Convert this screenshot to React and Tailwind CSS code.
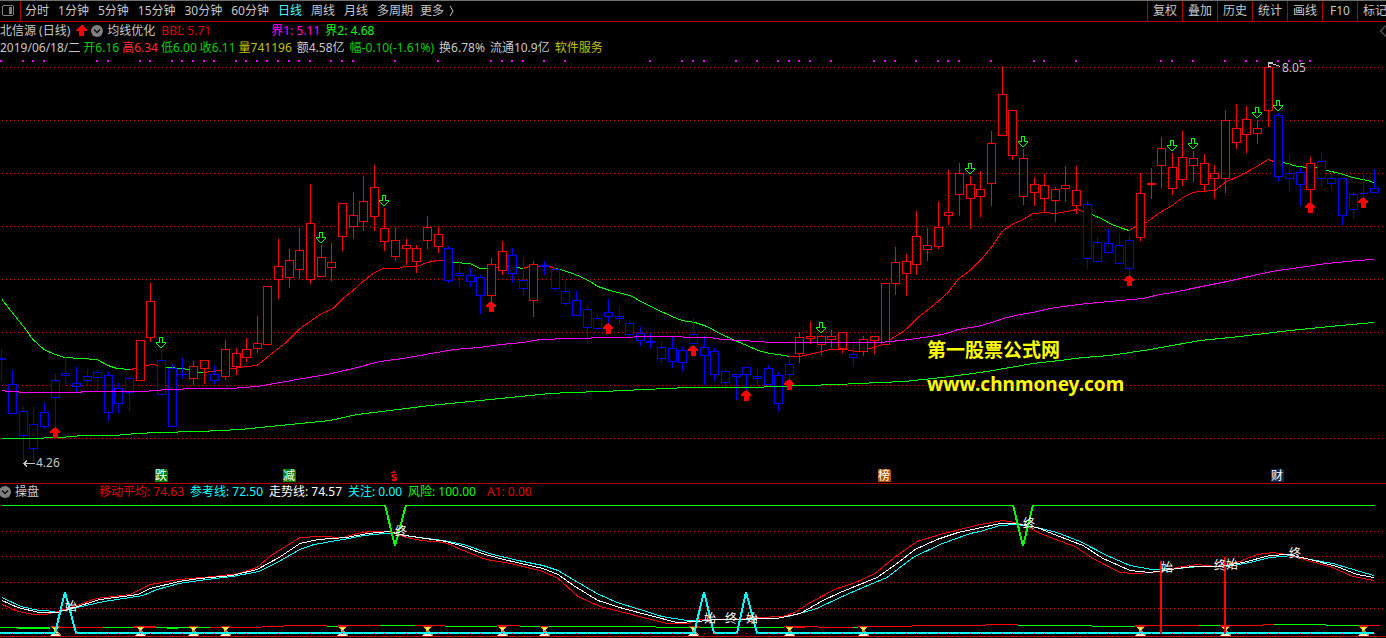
import React from "react";

const STEP = 10.64;
const xAt = (i) => Math.round(1.45 + i * STEP);

// [direction, high, body top, body bottom, low]
const CANDLES = [
  ["d", 350, 358, 359, 381], ["d", 370, 384, 413, 413], ["d", 407, 411, 435, 461], ["d", 407, 424, 448, 460],
  ["d", 403, 412, 426, 427], ["d", 374, 380, 397, 426], ["d", 356, 373, 375, 383], ["d", 367, 383, 386, 392],
  ["d", 369, 376, 380, 385], ["d", 370, 372, 377, 391], ["d", 372, 375, 412, 420], ["d", 383, 388, 403, 412],
  ["d", 377, 378, 392, 410], ["u", 340, 340, 380, 380], ["u", 283, 301, 337, 341], ["d", 350, 360, 394, 394],
  ["d", 364, 368, 426, 426], ["d", 358, 374, 374, 378], ["u", 361, 366, 378, 384], ["u", 360, 360, 368, 383],
  ["d", 365, 374, 380, 383], ["u", 340, 349, 376, 379], ["u", 348, 353, 366, 374], ["u", 338, 349, 357, 361],
  ["u", 316, 343, 348, 352], ["u", 286, 286, 344, 344], ["u", 239, 266, 279, 298], ["u", 249, 260, 277, 287],
  ["u", 228, 250, 269, 278], ["u", 184, 223, 279, 283], ["u", 245, 257, 276, 276], ["u", 243, 262, 267, 280],
  ["u", 203, 203, 236, 250], ["u", 192, 215, 226, 238], ["u", 176, 201, 221, 230], ["u", 165, 187, 216, 230],
  ["u", 208, 228, 241, 250], ["u", 227, 240, 256, 260], ["u", 239, 245, 248, 264], ["u", 245, 248, 261, 272],
  ["u", 216, 227, 240, 248], ["u", 227, 234, 246, 252], ["d", 246, 248, 280, 282], ["d", 261, 273, 275, 286],
  ["d", 268, 275, 281, 286], ["d", 275, 277, 295, 313], ["u", 258, 264, 295, 300], ["u", 241, 251, 270, 274],
  ["d", 248, 255, 273, 282], ["d", 258, 280, 288, 295], ["u", 261, 264, 300, 316], ["d", 261, 265, 266, 274],
  ["d", 263, 269, 288, 290], ["d", 281, 291, 303, 305], ["d", 291, 300, 315, 315], ["d", 306, 309, 327, 343],
  ["d", 314, 318, 328, 328], ["d", 299, 312, 316, 322], ["d", 307, 316, 318, 323], ["d", 321, 323, 334, 336],
  ["d", 327, 333, 340, 345], ["d", 333, 341, 342, 347], ["d", 342, 347, 358, 362], ["d", 337, 348, 361, 367],
  ["d", 347, 350, 362, 370], ["d", 318, 334, 343, 343], ["d", 336, 347, 355, 384], ["d", 348, 351, 374, 380],
  ["d", 369, 371, 382, 389], ["d", 374, 374, 376, 399], ["d", 367, 367, 374, 389], ["d", 369, 376, 378, 384],
  ["d", 365, 368, 384, 384], ["d", 372, 375, 403, 410], ["d", 358, 364, 374, 378], ["u", 332, 337, 353, 362],
  ["u", 321, 336, 338, 343], ["u", 335, 336, 344, 355], ["u", 330, 336, 339, 347], ["u", 332, 332, 348, 352],
  ["d", 341, 354, 357, 365], ["u", 336, 339, 351, 355], ["u", 336, 336, 340, 353], ["u", 283, 283, 344, 344],
  ["u", 247, 262, 283, 294], ["u", 254, 261, 273, 295], ["u", 211, 236, 264, 274], ["u", 228, 245, 249, 260],
  ["u", 201, 227, 246, 248], ["u", 170, 212, 215, 224], ["u", 163, 173, 194, 215], ["u", 176, 184, 198, 228],
  ["u", 171, 189, 196, 216], ["u", 131, 143, 183, 205], ["u", 66, 94, 135, 135], ["u", 110, 110, 155, 159],
  ["u", 149, 158, 196, 204], ["u", 177, 184, 192, 205], ["u", 174, 185, 198, 211], ["u", 187, 189, 200, 221],
  ["u", 166, 185, 188, 201], ["u", 166, 190, 205, 213], ["d", 200, 204, 258, 268], ["d", 238, 242, 261, 261],
  ["d", 229, 243, 252, 252], ["d", 233, 245, 263, 263], ["d", 236, 240, 268, 274], ["u", 173, 193, 237, 240],
  ["u", 168, 183, 184, 198], ["u", 137, 148, 165, 187], ["u", 153, 167, 188, 194], ["u", 131, 157, 179, 185],
  ["u", 151, 158, 165, 181], ["u", 154, 163, 184, 190], ["u", 165, 173, 178, 198], ["u", 110, 120, 178, 192],
  ["u", 104, 128, 142, 148], ["u", 106, 119, 134, 152], ["u", 120, 128, 133, 143], ["u", 64, 67, 110, 126],
  ["d", 113, 115, 176, 180], ["d", 154, 173, 178, 190], ["d", 168, 172, 184, 205], ["u", 157, 163, 189, 201],
  ["d", 153, 161, 178, 185], ["d", 171, 178, 183, 189], ["d", 178, 178, 215, 224], ["d", 192, 194, 209, 217],
  ["d", 174, 193, 193, 196], ["d", 169, 188, 192, 192],
];

const SIGNAL_DOTS = [
  0, 2, 3, 4, 9, 10, 13, 14, 16, 17, 18, 19, 20, 22, 23, 24, 25, 26, 27, 28, 29, 31, 32, 33, 37, 41, 46, 47, 48, 49,
  51, 53, 61, 64, 65, 66, 69, 71, 73, 74, 75, 76, 78, 82, 83, 84, 86, 88, 89, 90, 93, 97, 98, 101, 109, 110, 112,
  115, 117, 118, 120, 121, 122, 123,
];

const BBI = [
  ["#00ff00", "2,299 13,313 25,328 33,339 44,349 55,354 65,357 97,359 108,365 117,368 130,369"],
  ["#ff0000", "130,369 135,368 147,365 151,364 160,365"],
  ["#00ff00", "160,365 167,367 182,368 188,369 198,372 203,372"],
  ["#ff0000", "203,372 220,370 233,368 247,366 257,365 267,357 278,348 285,343 300,328 320,314 333,308 343,298 353,290 363,281 373,273 383,268 398,268 405,266 417,266 427,262 437,260 448,260"],
  ["#00ff00", "453,262 470,263 480,268 491,268"],
  ["#ff0000", "491,268 496,267 512,266"],
  ["#00ff00", "512,266 517,267 523,268"],
  ["#ff0000", "523,268 529,266 538,266 549,266 555,268"],
  ["#00ff00", "555,268 560,269 570,272 580,276 590,281 598,286 610,290 618,292 630,295 643,302 657,309 672,316 682,320 695,322 707,326 720,333 735,340 747,345 758,350 770,353 785,355 789,356"],
  ["#ff0000", "789,356 800,356 813,353 822,351 830,349 838,349 845,349 857,351 870,348 880,345 890,339 902,332 908,327 918,317 927,310 938,301 948,292 958,279 970,270 982,258 992,246 1002,231 1012,224 1023,219 1033,213 1045,212 1055,213 1067,211 1077,209 1087,212"],
  ["#00ff00", "1087,211 1092,214 1103,219 1112,224 1120,227 1129,230"],
  ["#ff0000", "1129,230 1136,226 1146,222 1152,218 1160,212 1172,205 1183,197 1193,192 1199,191 1215,190 1225,182 1242,174 1257,166 1268,159 1274,161"],
  ["#00ff00", "1274,160 1283,162 1298,166 1307,167 1315,167 1327,170 1340,173 1353,177 1367,180 1374,182"],
];

const BOUND_1 =
  "2,390 8,391 30,392 80,392 83,391 143,391 167,389 200,388 230,388 257,386 280,382 303,378 327,374 353,368 380,361 403,358 437,352 454,349 480,347 500,344 523,342 540,339 570,338 613,337 655,336 710,337 722,339 742,340 773,342 880,342 890,341 910,339 930,336 947,333 958,329 977,326 992,322 1003,318 1020,314 1033,312 1050,308 1063,306 1087,303 1110,301 1143,298 1160,294 1173,292 1187,289 1207,285 1227,281 1240,278 1253,275 1277,270 1293,268 1313,265 1327,263 1357,260 1374,259";
const BOUND_2 =
  "2,438 28,438 60,437 83,435 115,435 137,433 157,432 200,431 240,429 280,425 300,423 330,420 357,414 390,410 430,405 470,401 530,395 550,393 570,392 603,391 645,389 688,387 750,387 805,385 837,384 880,382 905,381 923,379 942,377 973,373 993,370 1010,367 1033,363 1060,360 1083,357 1110,355 1150,349 1200,340 1240,336 1290,330 1330,326 1374,322";

const REFERENCE =
  "2,597 21,606 39,610 59,611 77,607 104,601 143,595 157,589 179,583 207,579 232,576 259,571 279,561 300,549 314,544 343,539 364,535 384,533 396,533 411,536 443,540 464,544 489,553 518,560 543,565 558,570 573,579 597,593 617,602 640,609 662,616 687,620 713,619 737,619 777,618 792,615 817,608 840,597 863,587 887,577 913,557 940,544 970,533 980,531 1000,525 1017,524 1037,527 1057,532 1080,541 1107,555 1130,565 1152,569 1177,568 1200,566 1227,566 1250,562 1270,557 1293,555 1310,559 1333,563 1360,571 1374,575";
const TREND =
  "2,600 18,607 39,612 57,612 71,608 100,599 138,594 150,588 179,581 200,578 232,575 257,569 279,557 300,543 318,539 346,537 368,533 389,531 400,534 425,538 446,541 464,546 482,553 500,558 521,563 543,568 558,574 575,586 598,600 623,608 650,615 677,622 697,621 717,619 777,618 800,613 823,600 840,592 877,577 897,563 915,549 937,539 958,532 977,528 1000,523 1015,523 1037,527 1057,535 1083,545 1103,558 1130,570 1150,572 1170,569 1193,566 1220,566 1243,562 1270,555 1288,554 1310,559 1337,566 1357,574 1374,577";
const AVERAGE =
  "2,604 18,611 34,614 46,614 64,609 77,605 96,598 130,594 150,584 179,579 214,576 239,573 257,567 271,555 300,537 321,536 343,537 357,533 371,531 389,531 407,537 421,540 445,542 461,549 486,559 511,563 543,571 558,578 578,596 600,606 620,611 647,618 667,623 687,623 700,619 733,619 757,617 783,616 795,612 810,602 837,588 853,583 875,573 897,555 917,541 940,534 960,529 980,524 1003,520 1020,523 1038,532 1053,538 1075,546 1093,558 1120,572 1133,573 1153,572 1177,567 1197,564 1217,566 1237,562 1257,554 1273,552 1293,555 1307,560 1330,566 1353,576 1374,580";

// [start, end, y, colour, thickness]
const STRIP = [
  [0, 50, 627, "#00ff00", 1], [18, 50, 628, "#00ff00", 1], [51, 103, 627, "#ff0000", 1], [103, 134, 627, "#00ff00", 1],
  [134, 156, 626, "#ff0000", 2], [156, 210, 627, "#00ff00", 1], [167, 178, 628, "#00ff00", 1], [210, 262, 627, "#ff0000", 1],
  [262, 284, 626, "#ff0000", 1], [284, 327, 625, "#ff0000", 1], [327, 338, 626, "#00ff00", 1], [338, 380, 625, "#ff0000", 1],
  [380, 415, 625, "#00ff00", 1], [415, 445, 625, "#ff0000", 1], [445, 497, 626, "#00ff00", 1], [497, 520, 625, "#ff0000", 1],
  [520, 656, 626, "#00ff00", 1], [656, 689, 627, "#00ff00", 1], [689, 700, 626, "#ff0000", 2], [700, 784, 627, "#00ff00", 1],
  [784, 818, 626, "#ff0000", 1], [794, 805, 627, "#ff0000", 1], [818, 853, 627, "#ff0000", 1], [853, 858, 627, "#00ff00", 1],
  [858, 912, 626, "#ff0000", 1], [912, 986, 625, "#ff0000", 1], [986, 1018, 624, "#ff0000", 1], [1018, 1092, 625, "#00ff00", 1],
  [1092, 1135, 626, "#00ff00", 1], [1135, 1199, 625, "#ff0000", 1], [1199, 1220, 625, "#00ff00", 1], [1220, 1263, 625, "#ff0000", 1],
  [1263, 1274, 624, "#ff0000", 1], [1274, 1326, 624, "#00ff00", 1], [1326, 1359, 625, "#00ff00", 1], [1359, 1380, 625, "#ff0000", 1],
];

const HOURGLASSES = [55, 140, 193, 225, 342, 427, 502, 544, 693, 789, 863, 1140, 1225, 1363];

const TURN_LABELS = [
  ["始", 71, 611], ["终", 401, 536], ["始", 710, 623], ["终", 731, 623], ["始", 752, 623], ["终", 1029, 528],
  ["始", 1167, 572], ["终", 1220, 570], ["始", 1232, 569], ["终", 1295, 558],
];

const PERIODS = ["分时", "1分钟", "5分钟", "15分钟", "30分钟", "60分钟", "日线", "周线", "月线", "多周期"];
const TOOLS = ["复权", "叠加", "历史", "统计", "画线", "F10", "标记"];

function GridLine({ y }) {
  return <line x1="2" x2="1384" y1={y + 0.5} y2={y + 0.5} stroke="#c00000" strokeDasharray="1 3" />;
}

function Line({ points, color, width = 1 }) {
  return <polyline points={points} transform="translate(0 .5)" fill="none" stroke={color} strokeWidth={width} />;
}

function Candle({ index, data }) {
  const [dir, high, top, bottom, low] = data;
  const x = xAt(index);
  const color = dir === "u" ? "#ff0000" : "#0000ff";
  return (
    <g fill={color}>
      <rect x={x} y={high} width="1" height={low - high + 1} />
      {bottom - top > 1 ? (
        <rect x={x - 3.5} y={top + 0.5} width="8" height={bottom - top} fill="#000" stroke={color} />
      ) : (
        <rect x={x - 4} y={top} width="9" height={bottom - top + 1} />
      )}
    </g>
  );
}

function BuyArrow({ index, y }) {
  return (
    <path
      transform={`translate(${xAt(index) - 5} ${y})`}
      d="M5 0h1v1h1v1h1v1h1v1h1v1h-2v6H3V5H0V4h1V3h1V2h1V1h2z M8 4h2v2H8z M0 4h3v2H0z"
      fill="#ff0000"
    />
  );
}

function SellArrow({ index, y }) {
  return (
    <path
      transform={`translate(${xAt(index) - 5} ${y})`}
      d="M3.5 .5h3v5h3v1l-4.5 4.5L.5 6.5v-1h3z"
      fill="none"
      stroke="#00ff00"
    />
  );
}

function Badge({ x, text, color }) {
  return (
    <g>
      <path d={`M${x - 6} 469h11l2 2v11h-13z`} fill={color} />
      <text x={x} y="480" textAnchor="middle" fontSize="12" fill="#fff">{text}</text>
    </g>
  );
}

function Hourglass({ x }) {
  return (
    <g transform={`translate(${x - 6} 625)`}>
      <path d="M2 1h9v1H2z" fill="#d02010" />
      <path d="M3 2h7L8 5v1H5V5z" fill="#e8d020" />
      <path d="M5 3h3L7 5H6z" fill="#ffff70" />
      <path d="M6 5h1l3 3 2 2v1H1v-1l2-2z" fill="#c07850" />
      <path d="M5 7h3l1 1H4zM3 9h7l1 2H2z" fill="#fff0c8" />
    </g>
  );
}

function CollapseIcon() {
  return (
    <svg className="block h-3 w-3" viewBox="0 0 12 12" aria-hidden="true">
      <circle cx="6" cy="6" r="6" fill="#808080" />
      <path d="M3 4.5 6 7.5 9 4.5" fill="none" stroke="#101010" strokeWidth="1.5" />
    </svg>
  );
}

function PriceChart() {
  return (
    <svg
      className="block h-auto w-full overflow-visible"
      viewBox="0 56 1386 427"
      shapeRendering="crispEdges"
      role="img"
      aria-label="北信源 日线"
      fontFamily="'Noto Sans', 'Noto Sans CJK SC', sans-serif"
    >
      {[67, 120, 173, 226, 279, 332, 385, 438].map((y) => <GridLine key={y} y={y} />)}
      {SIGNAL_DOTS.map((i) => <rect key={i} x={xAt(i) - 1} y="60" width="2" height="2" fill="#ff00ff" />)}
      {BBI.map(([color, points]) => <Line key={points} points={points} color={color} />)}
      {CANDLES.map((c, i) => <Candle key={i} index={i} data={c} />)}
      <Line points={BOUND_1} color="#ff00ff" />
      <Line points={BOUND_2} color="#00ff00" />
      {[[15, 337], [30, 232], [36, 195], [77, 322], [91, 163], [96, 136], [110, 140], [112, 138], [118, 107], [120, 100]].map(
        ([i, y]) => <SellArrow key={i} index={i} y={y} />
      )}
      {[[5, 427], [46, 301], [57, 323], [65, 345], [70, 390], [74, 379], [106, 275], [123, 202], [128, 197]].map(
        ([i, y]) => <BuyArrow key={i} index={i} y={y} />
      )}
      <path d="M23.5 463.5H35M27 460.5l-3 3 3 3" fill="none" stroke="#c8c8c8" />
      <text x="36" y="467" fontSize="12" fill="#c8c8c8">4.26</text>
      <path d="M1268.5 62.5h4M1268.5 62v4l2 1M1269 63.5h3l8 3" fill="none" stroke="#c8c8c8" />
      <text x="1282" y="72" fontSize="12" fill="#c8c8c8">8.05</text>
      <Badge x={161} text="跌" color="#008000" />
      <Badge x={289} text="减" color="#008000" />
      <Badge x={884} text="榜" color="#b05000" />
      <Badge x={1277} text="财" color="#102850" />
      <path d="M393 471h2v1h1v1h-5v-1h2z" fill="#ff0000" />
      <text x="394" y="481" textAnchor="middle" fontSize="12" fontWeight="bold" fill="#ff0000">s</text>
      <g fill="#ffff00" fontWeight="bold" fontSize="19">
        <text x="927" y="357">第一股票公式网</text>
        <text x="927" y="391">www.chnmoney.com</text>
      </g>
    </svg>
  );
}

function IndicatorChart() {
  return (
    <svg
      className="block h-auto w-full"
      viewBox="0 500 1386 138"
      shapeRendering="crispEdges"
      role="img"
      aria-label="操盘"
      fontFamily="'Noto Sans CJK SC', sans-serif"
    >
      {[531, 556, 582, 608].map((y) => <GridLine key={y} y={y} />)}
      <Line points={REFERENCE} color="#00ffff" />
      <Line points={AVERAGE} color="#ff0000" />
      <Line points={TREND} color="#ffffff" />
      <path d="M2 505.5H385M406 505.5H1013M1033 505.5H1375" stroke="#00ff00" />
      <path d="M385 505l10 41 11-41M1013 505l10 41 10-41" fill="none" stroke="#00ff00" strokeWidth="2" />
      {STRIP.map(([a, b, y, color, h]) => <rect key={`${a}-${y}`} x={a} y={y} width={b - a} height={h} fill={color} />)}
      {HOURGLASSES.map((x) => <Hourglass key={x} x={x} />)}
      <path
        d="M0 633H55l10-41 11 41H694l10-41 10 41H737l9-41 11 41H1374"
        fill="none"
        stroke="#00ffff"
        strokeWidth="2"
      />
      {CANDLES.map((c, i) => <rect key={i} x={xAt(i)} y="633" width="1" height="1" fill="#ff0000" />)}
      <path d="M1161 561V634M1225 557V634" stroke="#ff0000" strokeWidth="2" />
      {TURN_LABELS.map(([t, x, y]) => (
        <text key={x} x={x} y={y} textAnchor="middle" fontSize="12" fill="#fff">{t}</text>
      ))}
      <path d="M0 636.5H1386" stroke="#b00000" />
    </svg>
  );
}

export default function App() {
  return (
    <main className="min-h-screen overflow-hidden bg-black font-['Noto_Sans','Noto_Sans_CJK_SC',sans-serif] text-xs leading-4 text-[#c8c8c8]">
      <header className="flex h-[22px] border-y border-t-[#707070] border-b-[#b00000]">
        <button type="button" aria-label="侧栏" className="flex w-[21px] shrink-0 items-center border-r border-[#b00000] pl-[2px]">
          <svg className="block h-3 w-3" viewBox="0 0 12 12" shapeRendering="crispEdges">
            <path d="M1 .5h10M1 10.5h10M.5 1v9M11.5 1v9" stroke="#808080" fill="none" />
            <path d="M7 2h3v7H7z" fill="#808080" />
          </svg>
        </button>
        <nav className="flex items-center gap-[9px] whitespace-nowrap pl-1">
          {PERIODS.map((p) => (
            <button key={p} type="button" className={p === "日线" ? "text-[#40ffff]" : ""}>{p}</button>
          ))}
          <button type="button" className="-ml-0.5 flex items-center gap-1">
            更多
            <svg className="h-3 w-2" viewBox="0 0 8 12">
              <path d="M2 1 5 6 2 11" fill="none" stroke="#c8c8c8" />
            </svg>
          </button>
        </nav>
        <div className="ml-auto flex w-[239px] shrink-0 overflow-hidden">
          {TOOLS.map((t) => (
            <button key={t} type="button" className="w-[35px] shrink-0 whitespace-nowrap border-l border-[#b00000] text-center">
              {t}
            </button>
          ))}
        </div>
      </header>

      <section>
        <div className="flex h-[17px] items-center whitespace-nowrap">
          <h1>北信源 (日线)</h1>
          <svg className="ml-[6px] h-[11px] w-[11px]" viewBox="0 0 11 11" shapeRendering="crispEdges" aria-hidden="true">
            <path d="M5 0h1l5 5v1H8v5H3V6H0V5z" fill="#ff0000" />
          </svg>
          <button type="button" aria-label="收起均线优化" className="ml-1"><CollapseIcon /></button>
          <span className="ml-1">均线优化</span>
          <span className="ml-[6px] w-[110px] text-[#e00000]">BBI: 5.71</span>
          <span className="text-[#ff00ff]">界1: 5.11</span>
          <span className="ml-[5px] text-[#00ff00]">界2: 4.68</span>
          <svg className="-mr-[6px] ml-auto h-3 w-3" viewBox="0 0 12 12" aria-hidden="true">
            <path d="M6 .5 11.5 6 6 11.5.5 6z" fill="none" stroke="#909090" />
          </svg>
        </div>
        <div className="flex h-[17px] items-center gap-[5px] whitespace-nowrap">
          <div className="flex gap-[3px]">
            <span>2019/06/18/二</span>
            <span className="text-[#00d000]">开6.16</span>
            <span className="text-[#ff3030]">高6.34</span>
            <span className="text-[#00d000]">低6.00</span>
            <span className="text-[#00d000]">收6.11</span>
            <span className="text-[#c0c000]">量741196</span>
          </div>
          <span>额4.58亿</span>
          <span className="text-[#00d000]">幅-0.10(-1.61%)</span>
          <span>换6.78%</span>
          <span>流通10.9亿</span>
          <span className="text-[#c0c000]">软件服务</span>
        </div>
        <PriceChart />
      </section>

      <section className="border-t border-[#b00000]">
        <div className="flex h-4 items-center whitespace-nowrap">
          <button type="button" aria-label="收起操盘" className="-ml-px"><CollapseIcon /></button>
          <span className="ml-1 w-[84px]">操盘</span>
          <span className="w-[91px] text-[#e00000]">移动平均: 74.63</span>
          <span className="w-[79px] text-[#00ffff]">参考线: 72.50</span>
          <span className="w-[79px] text-white">走势线: 74.57</span>
          <span className="w-[60px] text-[#00ffff]">关注: 0.00</span>
          <span className="w-[79px] text-[#00ff00]">风险: 100.00</span>
          <span className="text-[#e00000]">A1: 0.00</span>
        </div>
        <IndicatorChart />
      </section>
    </main>
  );
}
